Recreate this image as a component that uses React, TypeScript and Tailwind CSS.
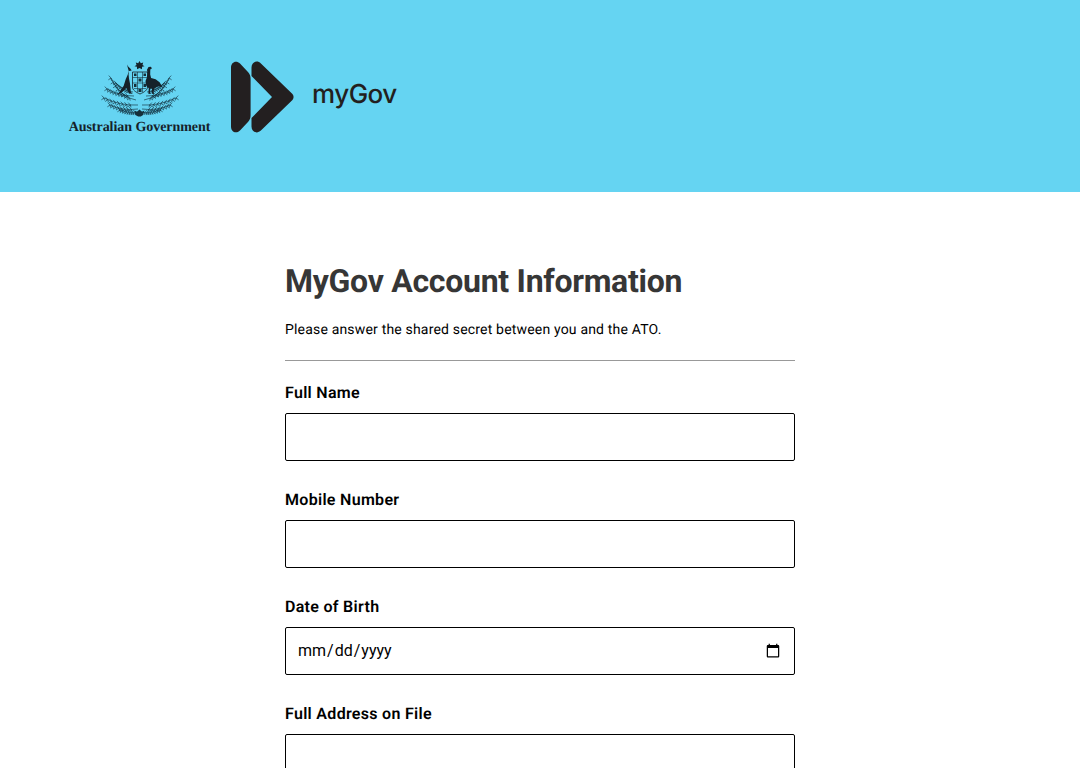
const fields = [
  { label: "Full Name", type: "text" },
  { label: "Mobile Number", type: "tel" },
  { label: "Date of Birth", type: "date" },
  { label: "Full Address on File", type: "text" },
]

// wattle branches as [start, control, end] on the left half, mirrored for the right
const branches = [
  [37, 45, 20, 46, 3, 38],
  [35, 40, 20, 38, 10, 18],
  [37, 49, 22, 51, 9, 45],
  [38, 52, 30, 54, 19, 50],
  [33, 36, 18, 36, 6, 29],
  [32, 32, 22, 31, 15, 23],
]

// pairs of short leaves along a branch, and a blossom every few steps
function sprayPath([x0, y0, cx, cy, x1, y1]: number[]) {
  let d = `M${x0} ${y0}Q${cx} ${cy} ${x1} ${y1}`
  for (let i = 2; i <= 9; i++) {
    const t = i / 9
    const x = (1 - t) * (1 - t) * x0 + 2 * t * (1 - t) * cx + t * t * x1
    const y = (1 - t) * (1 - t) * y0 + 2 * t * (1 - t) * cy + t * t * y1
    const p = `${x.toFixed(1)} ${y.toFixed(1)}`
    d += `M${p}l-2.200-2.400M${p}l-2.600 1.800M${p}l.6 2.400`
  }
  return d
}

function Crest() {
  return (
    <svg width="78" height="58" viewBox="0 0 78 58" className="block">
      <path d="M38.500 1l1.300 2.200 2.400-.7-.7 2.400 2 1.400-2.400.5-.2 2.400-2.400-1.100-2.400 1.100-.2-2.400-2.400-.5 2-1.400-.7-2.400 2.400.7z" fill="#15222a" />
      <g fill="none" stroke="#123240" strokeWidth=".65">
        {branches.map((b) => (
          <g key={b.join()}>
            <path d={sprayPath(b)} />
            <path d={sprayPath(b)} transform="matrix(-1 0 0 1 78 0)" />
          </g>
        ))}
      </g>
      <path d="M31.500 12h15v15c0 3-3 5-7.500 7-4.500-2-7.500-4-7.500-7z" fill="#65d4f2" stroke="#15222a" strokeWidth=".8" />
      <path d="M31.500 17.500h15M31.500 23h15M33 28.500h12M36.500 12v20M41.500 12v20" stroke="#15303a" strokeWidth=".6" />
      <path d="M33 13.500h2.500v2.500H33zM42.500 13.500H45v2.500h-2.500zM37.500 18.500h3v3h-3zM33 24h2.500v3H33zM42.500 24H45v3h-2.500zM37.500 29h3v3h-3z" fill="#15303a" />
      {/* kangaroo */}
      <path
        d="M26 4.500l1.200 2 2.300 2.300 1.200 1.700-2.700.6-.4 3.400.4 4 .9 4.500.6 4.500.3 4.500 2 1.700-3.800-.1-1.200-2.700-1.500-3-3.500 3.500-5.500 3.700 3.400-4.800 3-4.600 2-6.500 2-4.500 1.100-3.500-.8-2.800z"
        fill="#15222a"
      />
      {/* emu */}
      <path
        d="M47.500 7l2.300-.3 1.200 1.600-1.700 1.100-.1 5 .9 3.500 4.500 1.300 4 3 3.100 5.200-3.400-1.200-2.300.8-2.500 1.500-1 3.500.7 1.900-2.400-.2.200-5-1.700.1-.3 4 1 1.100-2.700-.1.500-5.600-2.500-2.300-.8-4.800 1.400-3.700.6-4.400-.5-3.300z"
        fill="#15222a"
      />
      <path d="M33.500 50.500l2.500 1.300 2.500-2.400 2.500 2.400 2.500-1.300-1.400 4.500-2.300 1.500h-2.600l-2.800-1.500z" fill="#15303a" />
    </svg>
  )
}

function MyGovMark() {
  return (
    <svg width="63" height="72" viewBox="0 0 63 72" className="block">
      <path
        d="M0 6.500C0 1 5.200-1.200 9 2.500l8.200 8.800c1.700 1.800 2.400 4 2.400 6.400v36.600c0 2.400-.7 4.600-2.400 6.400L9 69.500C5.200 73.200 0 71 0 65.500z"
        fill="#231f20"
      />
      <path
        d="M20.500 6.500c0-5.500 5.500-7.800 9.400-4.100l31.300 30.400c1.800 1.800 1.800 4.600 0 6.400L29.900 69.600c-3.900 3.700-9.400 1.400-9.400-4.100V57l20.500-21L20.500 15z"
        fill="#231f20"
      />
    </svg>
  )
}

export default function App() {
  return (
    <div className="h-screen overflow-hidden bg-white font-['Roboto',sans-serif] [text-rendering:geometricPrecision]">
      <header className="h-[192px] bg-[#65d4f2] pl-[68px] pt-[60px] flex items-start">
        <div className="flex flex-col items-center w-[143px]">
          <Crest />
          <span className="font-['Liberation_Serif',serif] font-bold text-[14px] leading-[16px] mt-[2px] tracking-[-0.05px] text-[#15222a] whitespace-nowrap">
            Australian Government
          </span>
        </div>
        <div className="ml-[20px] mt-px">
          <MyGovMark />
        </div>
        <span className="ml-[18px] mt-[17px] font-['Inter',sans-serif] font-medium text-[26px] leading-[36px] tracking-[-0.5px] text-[#231f20]">myGov</span>
      </header>

      <main className="w-[510px] mx-auto pt-[70px]">
        <h1 className="text-[32px] leading-[38px] font-bold tracking-[-0.28px] text-[#363636]">MyGov Account Information</h1>
        <p className="mt-[20px] text-[14px] leading-[21px] tracking-[0.18px] text-black">Please answer the shared secret between you and the ATO.</p>
        <hr className="mt-[19px] border-t border-[#999999]" />
        <form className="mt-[22px] flex flex-col gap-[29px]">
          {fields.map((field) => (
            <label key={field.label} className="block">
              <span className="block text-[16px] leading-[19px] font-semibold tracking-[0.3px] text-black">{field.label}</span>
              <input
                type={field.type}
                className="mt-[11px] block w-full h-[48px] px-[11px] rounded-[2px] border border-black bg-white text-[16px] text-black"
              />
            </label>
          ))}
        </form>
      </main>
    </div>
  )
}
